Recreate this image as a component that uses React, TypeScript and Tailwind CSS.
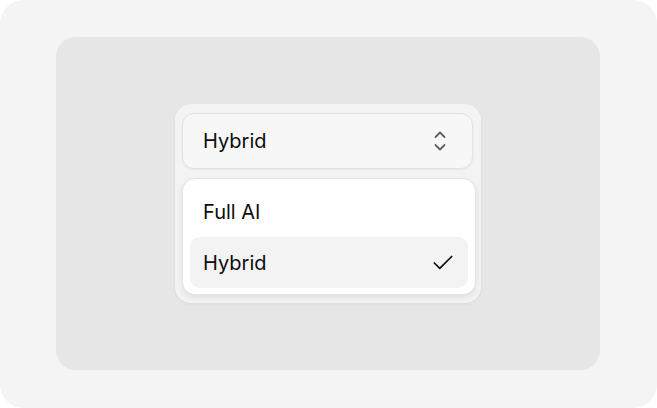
import { Check } from "lucide-react"

const options = ["Full AI", "Hybrid"]

function UpDown() {
  return (
    <svg width="12" height="22" viewBox="0 0 12 22" fill="none" stroke="#5f5f5f" strokeWidth="1.8" strokeLinecap="round" strokeLinejoin="round">
      <path d="M1.5 7 6 2.5 10.5 7" />
      <path d="M1.5 15 6 19.5 10.5 15" />
    </svg>
  )
}

export default function App() {
  const selected = "Hybrid"

  return (
    <div className="w-[657px] h-[408px] bg-white font-['Inter','Liberation_Sans',sans-serif] text-[#0d0d0d]">
      <div className="w-full h-full rounded-[24px] bg-[#f4f4f4] pl-[56px] pt-[37px]">
        <div className="w-[544px] h-[333px] rounded-[20px] bg-[#e6e6e6] pl-[119px] pt-[67px]">
          <div className="w-[306px] h-[199px] rounded-[16px] bg-[#f3f3f3] p-[7px] pt-[9px] shadow-[0_1px_3px_rgba(0,0,0,0.06)] flex flex-col gap-[9px]">
            {/* trigger */}
            <button className="w-[291px] h-[56px] shrink-0 rounded-[12px] border border-[#e2e2e2] bg-[#f7f7f7] flex items-center justify-between pl-[20px] pr-[26px] shadow-[0_1px_2px_rgba(0,0,0,0.05)]">
              <span className="text-[20px] leading-none">{selected}</span>
              <UpDown />
            </button>
            {/* menu */}
            <div className="w-[294px] h-[117px] rounded-[13px] border border-[#e4e4e4] bg-white px-[7px] pt-[7px] pb-[6px] shadow-[0_3px_6px_rgba(0,0,0,0.08)] flex flex-col">
              {options.map((o) => (
                <div
                  key={o}
                  className={`h-[51px] rounded-[10px] flex items-center justify-between pl-[13px] pr-[12px] ${o === selected ? "bg-[#f3f3f3]" : ""}`}
                >
                  <span className="text-[20px] leading-none">{o}</span>
                  {o === selected && <Check size={26} strokeWidth={1.6} className="text-[#111]" />}
                </div>
              ))}
            </div>
          </div>
        </div>
      </div>
    </div>
  )
}
